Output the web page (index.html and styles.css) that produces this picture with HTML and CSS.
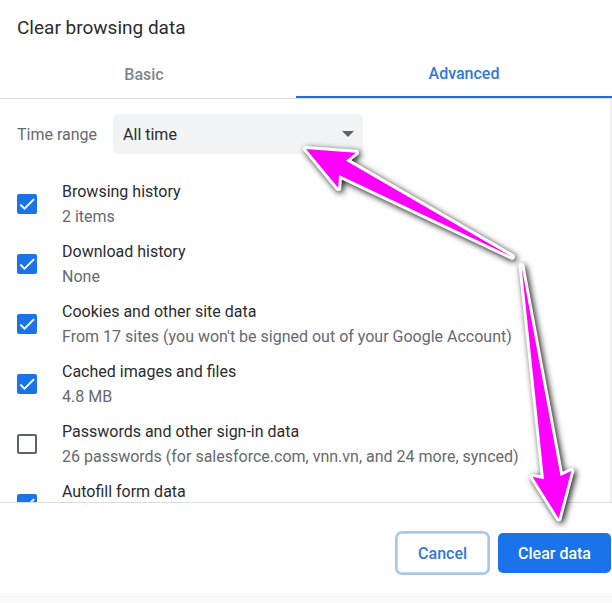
FILE: index.html
```html
<!DOCTYPE html>
<html lang="en">
  <head>
    <meta charset="UTF-8" />
    <meta name="viewport" content="width=device-width, initial-scale=1.0" />
    <title>Clear browsing data</title>
    <link rel="stylesheet" href="styles.css">
  </head>
  <body>
    <svg class="sprite" width="0" height="0" aria-hidden="true">
      <symbol id="tick" viewBox="0 0 24 24">
        <path d="M9 16.17L4.83 12l-1.42 1.41L9 19 21 7l-1.41-1.41z" />
      </symbol>
    </svg>
    <main class="dialog">
      <h1 class="title">Clear browsing data</h1>
      <div class="tabs" role="tablist">
        <button class="tab" type="button" role="tab">Basic</button>
        <button class="tab active" type="button" role="tab" aria-selected="true">Advanced</button>
      </div>
      <div class="content">
        <div class="range">
          <label for="time">Time range</label>
          <div class="select">
            <select id="time">
              <option>All time</option>
            </select>
          </div>
        </div>
        <ul class="list">
          <li>
            <label class="item">
              <span class="box"><input type="checkbox" checked /><svg><use href="#tick" /></svg></span>
              <span class="text">Browsing history <small>2 items</small></span>
            </label>
          </li>
          <li>
            <label class="item">
              <span class="box"><input type="checkbox" checked /><svg><use href="#tick" /></svg></span>
              <span class="text">Download history <small>None</small></span>
            </label>
          </li>
          <li>
            <label class="item">
              <span class="box"><input type="checkbox" checked /><svg><use href="#tick" /></svg></span>
              <span class="text">Cookies and other site data <small>From 17 sites (you won't be signed out of your Google Account)</small></span>
            </label>
          </li>
          <li>
            <label class="item">
              <span class="box"><input type="checkbox" checked /><svg><use href="#tick" /></svg></span>
              <span class="text">Cached images and files <small>4.8 MB</small></span>
            </label>
          </li>
          <li>
            <label class="item">
              <span class="box"><input type="checkbox" /><svg><use href="#tick" /></svg></span>
              <span class="text">Passwords and other sign-in data <small>26 passwords (for salesforce.com, vnn.vn, and 24 more, synced)</small></span>
            </label>
          </li>
          <li>
            <label class="item">
              <span class="box"><input type="checkbox" checked /><svg><use href="#tick" /></svg></span>
              <span class="text">Autofill form data <small></small></span>
            </label>
          </li>
        </ul>
      </div>
      <div class="footer">
        <button class="btn cancel" type="button">Cancel</button>
        <button class="btn clear" type="button">Clear data</button>
      </div>
    </main>
    <svg class="arrows" viewBox="0 0 612 603" aria-hidden="true">
      <path d="M306 149L356 152.7 346 160.7 512 256.7 339 175 338.3 188z" />
      <path d="M521.5 266L560.5 476 571.3 471 558.7 518.5 532.5 476.7 544 479.3z" />
    </svg>
  </body>
</html>
```
FILE: styles.css
```css
* {
  box-sizing: border-box;
}
body {
  position: relative;
  margin: 0;
  height: 100vh;
  padding-bottom: 10px;
  background: #fafafa;
  color: #2b2c2f;
  font: 16px/25px Roboto, sans-serif;
}
button,
select {
  font: inherit;
}
.sprite {
  position: absolute;
}
.dialog {
  display: flex;
  flex-direction: column;
  height: 100%;
  background: #fff;
}
.title {
  margin: 0;
  padding: 15px 17px 10px;
  font-size: 19px;
  font-weight: 400;
  line-height: 25px;
}
.tabs {
  display: grid;
  grid-template-columns: 296fr 316fr;
  height: 49px;
  border-bottom: 1px solid #dadce0;
}
.tab {
  padding: 0 8px 0 0;
  border: 0;
  background: none;
  color: #80868b;
  font-weight: 500;
}
.tab.active {
  padding: 0 0 0 20px;
  border-bottom: 2px solid #2470d0;
  color: #2f78d8;
}
.content {
  flex: 1;
  min-height: 0;
  padding: 15px 17px 0;
  border-right: 2px solid #f1f1f1;
  overflow: hidden;
}
.range {
  display: flex;
  align-items: center;
  gap: 16px;
  margin-bottom: 20px;
  color: #66696e;
}
.select {
  position: relative;
  width: 250px;
}
.select select {
  display: block;
  width: 100%;
  height: 40px;
  padding: 0 10px;
  border: 0;
  border-radius: 5px;
  appearance: none;
  background: #f1f3f4;
  color: #2b2c2f;
}
.select::after {
  content: '';
  position: absolute;
  top: 17px;
  right: 9px;
  border: 6px solid transparent;
  border-top-color: #5f6368;
  border-bottom: 0;
}
.list {
  margin: 0;
  padding: 0;
  list-style: none;
}
.item {
  display: flex;
  align-items: center;
  gap: 25px;
  height: 60px;
}
.box {
  display: grid;
  width: 20px;
  height: 20px;
}
.box input,
.box svg {
  grid-area: 1 / 1;
  width: 20px;
  height: 20px;
  margin: 0;
}
.box input {
  appearance: none;
  border: 2px solid #5f6368;
  border-radius: 2px;
}
.box input:checked {
  border-color: #1a73e8;
  background: #1a73e8;
}
.box svg {
  display: none;
  fill: #fff;
  stroke: #fff;
  stroke-width: 0.5;
  pointer-events: none;
}
.box input:checked + svg {
  display: block;
}
.text small {
  display: block;
  min-height: 25px;
  color: #66696e;
  font-size: 16px;
}
.footer {
  display: flex;
  justify-content: flex-end;
  gap: 10px;
  padding: 30px 1px 20px;
  border-top: 1px solid #dadce0;
}
.btn {
  height: 40px;
  padding: 0 20px;
  border: 0;
  border-radius: 5px;
  font-weight: 500;
}
.cancel {
  border: 1px solid #c4d8f5;
  background: #fff;
  box-shadow: 0 0 0 2px #a8c5f0;
  color: #2f78d8;
}
.clear {
  background: #1a73e8;
  color: #fff;
}
/* pointers over the dialog */
.arrows {
  position: absolute;
  top: 0;
  left: 0;
  width: 100%;
  pointer-events: none;
  fill: #f0f;
  stroke: #fff;
  stroke-width: 6px;
  stroke-linejoin: round;
  paint-order: stroke;
  filter: drop-shadow(2px 2px 3px rgba(0, 0, 0, 0.9));
}
```
